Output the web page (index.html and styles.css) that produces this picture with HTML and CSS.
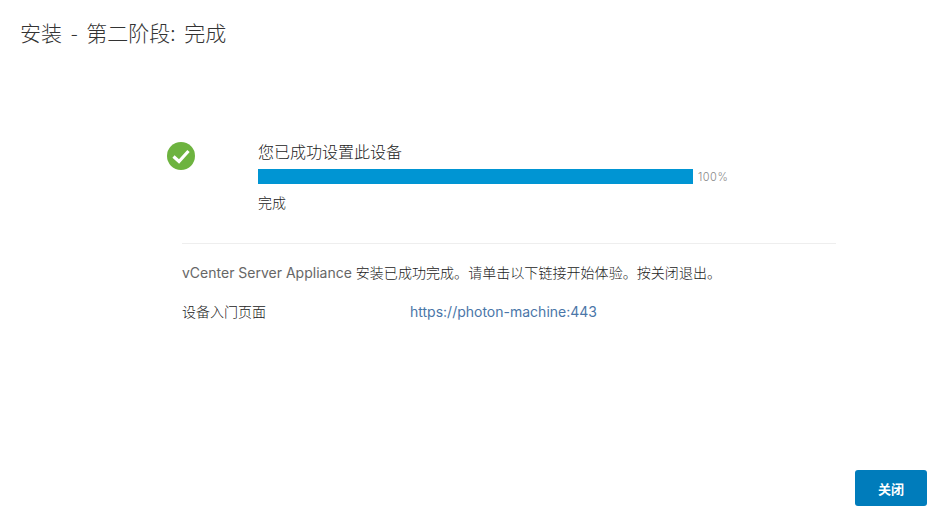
FILE: index.html
```html
<!DOCTYPE html>
<html lang="zh-CN">
<head>
    <meta charset="UTF-8">
    <title>安装 - 第二阶段: 完成</title>
    <link rel="stylesheet" href="styles.css">
</head>
<body>
    <div class="page">
        <h1 class="title">安装 - 第二阶段: 完成</h1>

        <div class="main">
            <div class="status">
                <div class="status-icon">
                    <svg width="30" height="30" viewBox="0 0 30 30">
                        <circle cx="15" cy="14" r="14" fill="#6db33f"/>
                        <path d="M7.5 14.5 L13 19.5 L22.5 9" fill="none" stroke="#fff" stroke-width="3.2"/>
                    </svg>
                </div>
                <div class="status-text">
                    <div class="status-title">您已成功设置此设备</div>
                    <div class="progress-row">
                        <div class="progress-bar"></div>
                        <span class="progress-num">100%</span>
                    </div>
                    <div class="status-sub">完成</div>
                </div>
            </div>

            <div class="details">
                <p class="message"><span class="latin">vCenter Server Appliance</span> <span class="cjk">安装已成功完成。请单击以下链接开始体验。按关闭退出。</span></p>
                <div class="link-row">
                    <span class="link-label">设备入门页面</span>
                    <a class="link-url" href="#">https://photon-machine:443</a>
                </div>
            </div>
        </div>

        <div class="footer">
            <button type="button" class="close-btn">关闭</button>
        </div>
    </div>
</body>
</html>
```

FILE: styles.css
```css
body {
    margin: 0;
    background-color: #fff;
    color: #333;
    font-family: "Inter", "Noto Sans CJK SC", sans-serif;
}

.page {
    display: flex;
    flex-direction: column;
    height: 528px;
    overflow: hidden;
}

.title {
    margin: 0;
    padding: 18px 0 0 20px;
    font-size: 21px;
    line-height: 28px;
    font-weight: 300;
    word-spacing: 4px;
    color: #333;
    font-family: "Noto Sans CJK SC", sans-serif;
}

.main {
    flex: 1;
    padding: 96px 0 0 166px;
}

.status {
    display: flex;
}

.status-icon {
    width: 92px;
}

.status-title {
    font-size: 16px;
    line-height: 20px;
    height: 20px;
    font-weight: 300;
    color: #222;
}

.progress-row {
    display: flex;
    align-items: center;
    margin-top: 7px;
}

.progress-bar {
    width: 435px;
    height: 15px;
    background-color: #0095d3;
}

.progress-num {
    margin-left: 5px;
    font-size: 11px;
    letter-spacing: 0.5px;
    font-weight: 300;
    color: #888;
}

.status-sub {
    margin-top: 9px;
    font-size: 14px;
    line-height: 20px;
    font-weight: 300;
    color: #222;
}

.details {
    width: 654px;
    margin: 30px 0 0 16px;
    padding-top: 19px;
    border-top: 1px solid #eee;
}

.message {
    margin: 0;
    font-size: 14px;
    line-height: 20px;
    font-weight: 300;
    color: #222;
}

.latin {
    font-weight: 400;
    color: #666;
}

.cjk {
    letter-spacing: 0.05px;
}

.link-row {
    display: flex;
    margin-top: 19px;
    font-size: 14px;
    line-height: 20px;
    font-weight: 300;
    color: #222;
}

.link-label {
    width: 228px;
}

.link-url {
    font-weight: 400;
    color: #4a76a8;
    text-decoration: none;
}

.footer {
    display: flex;
    justify-content: flex-end;
    padding: 0 18px 22px 0;
}

.close-btn {
    width: 72px;
    height: 36px;
    border: none;
    border-radius: 3px;
    background-color: #007cbb;
    color: #fff;
    font-size: 13px;
    font-weight: 700;
    font-family: "Noto Sans CJK SC", sans-serif;
}
```
